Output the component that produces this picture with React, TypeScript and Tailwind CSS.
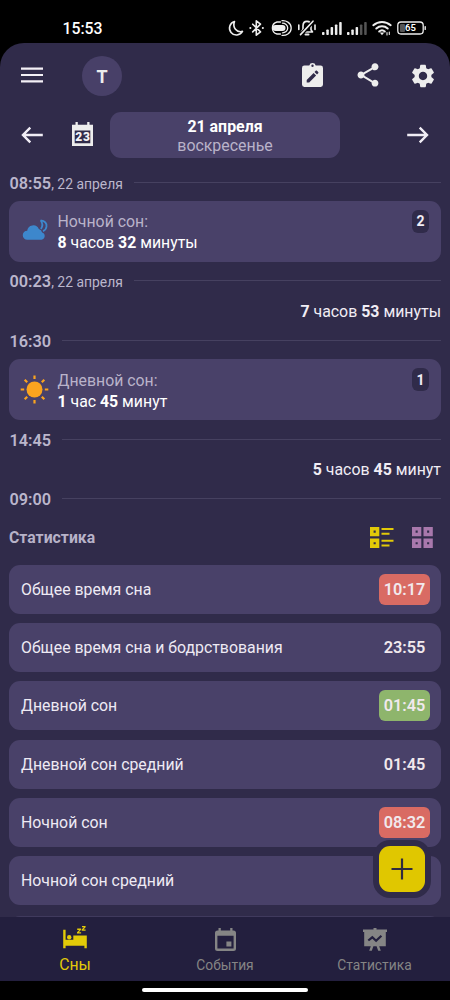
import type { ReactNode } from 'react';
import { MdSettings, MdShare } from 'react-icons/md';

function StatusBar() {
  return (
    <div className="flex h-[43px] shrink-0 items-start justify-between pl-[62.500px] pr-[23px] pt-[17px] text-white">
      <span className="mt-px text-[15.800px] font-medium leading-[22px]">15:53</span>
      <svg width="200" height="22" viewBox="227 17 200 22" fill="none" stroke="#eee" strokeWidth="1.6" strokeLinecap="round" strokeLinejoin="round">
        <path d="M234.500 21.500a6.900 6.900 0 1 0 8 9.900c-6 1.500-10.200-4-8-9.900Z" />
        <path d="m252.700 24.200 7.800 7.700-4.200 3.300V20.800l4.200 3.300-7.800 7.800" />
        <path d="M250.300 28h.1M262.800 28h.1" strokeWidth="2" />
        <path d="M280.500 22h-3.500a6.200 6.200 0 0 0 0 12h3.500M282 20.700c3.500-.4 9.200 1.800 9.200 7.300s-5.700 7.900-9.200 7.300M282.500 23.200c2.600 0 5.200 1.900 5.200 4.800s-2.600 4.800-5.200 4.800" strokeWidth="1.300" />
        <rect x="272.500" y="25" width="13" height="6" rx="3" fill="#eee" stroke="none" />
        <path d="M301.500 32h11l-1.500-2.300V26c0-2.700-1.500-4.600-4-4.600s-4 1.900-4 4.600v3.500L301.500 32Z" />
        <path d="M305.500 34.500h3" strokeWidth="2" />
        <path d="m300.500 35 13-14" stroke="#000" strokeWidth="4" />
        <path d="m300.500 34.600 12.500-13.400M298.800 25v4.500M315 25v4.500" />
        <g fill="#eee" stroke="none">
          <rect x="322" y="32" width="2.500" height="3" rx=".8" /><rect x="326.300" y="29.500" width="2.500" height="5.500" rx=".8" /><rect x="330.600" y="27" width="2.500" height="8" rx=".8" /><rect x="334.900" y="24.500" width="2.500" height="10.500" rx=".8" /><rect x="339.200" y="22" width="2.500" height="13" rx=".8" />
          <rect x="347" y="32" width="2.500" height="3" rx=".8" /><rect x="351.300" y="29.500" width="2.500" height="5.500" rx=".8" /><rect x="355.600" y="27" width="2.500" height="8" rx=".8" />
          <g fill="#555"><rect x="359.900" y="24.500" width="2.500" height="10.500" rx=".8" /><rect x="364.200" y="22" width="2.500" height="13" rx=".8" /></g>
        </g>
        <path d="M373.300 25.200c5-4.400 12.400-4.400 17.400 0M376.300 28.500c3.300-2.900 8.100-2.900 11.400 0M379.200 31.500c1.600-1.400 4-1.400 5.600 0" strokeWidth="2" />
        <path d="m379.800 32.500 2.200 2.700 2.200-2.700Z" fill="#eee" stroke="none" />
        <path d="M387 32.500v2.500M389.300 32v2.500" strokeWidth="1.100" />
        <rect x="397.800" y="22" width="25.400" height="12" rx="3.200" strokeWidth="1.300" />
        <rect x="400" y="24" width="5" height="8" rx="1" fill="#555" stroke="none" />
        <path d="M425.200 26.800v2.600" strokeWidth="1.400" />
        <text x="410.500" y="31.400" textAnchor="middle" fill="#fff" stroke="none" fontSize="9.500" fontWeight="600">65</text>
      </svg>
    </div>
  );
}

function Arrow({ right = false }: { right?: boolean }) {
  return (
    <svg width="24" height="20" viewBox="0 0 24 20" className={right ? 'rotate-180' : ''} fill="none" stroke="#f0edf5" strokeWidth="2.400">
      <path d="M22.800 10H3M10.300 2.700 3 10l7.300 7.300" />
    </svg>
  );
}

function Header() {
  return (
    <>
      <div className="flex h-[64px] shrink-0 items-center pl-[21px] pr-[13px] text-[#ededed]">
        <svg width="22" height="16" viewBox="0 0 22 16" fill="#f3f0f6">
          <path d="M0 .500h22v2.200H0zM0 6.900h22v2.200H0zM0 13.300h22v2.200H0z" />
        </svg>
        <div className="ml-[39px] mt-[2px] flex size-10 items-center justify-center rounded-full bg-[#484068] text-[18px] font-bold">T</div>
        <svg className="ml-[180px]" width="21" height="25" viewBox="0 0 21 25" fill="#ededed">
          <path fillRule="evenodd" d="M2.400 2.500H7.300a3.300 3.300 0 0 1 6.400 0h4.900A2.400 2.400 0 0 1 21 4.900v16.600a2.400 2.400 0 0 1-2.400 2.400H2.400A2.400 2.400 0 0 1 0 21.500V4.900A2.400 2.400 0 0 1 2.400 2.500Zm8.100-.900a1.200 1.200 0 1 0 0 2.400 1.200 1.200 0 0 0 0-2.400ZM4.700 16.900v2.500h2.500l6.900-6.900-2.500-2.500-6.900 6.900ZM12.500 9l2.500 2.500 1.200-1.200c.4-.4.4-.9 0-1.300L15 7.800c-.4-.4-.9-.4-1.300 0L12.500 9Z" />
        </svg>
        <MdShare className="ml-[31px] shrink-0" size={28} />
        <MdSettings className="ml-[27px] mt-px shrink-0" size={28} />
      </div>
      <div className="mt-[5px] flex h-[46px] shrink-0 items-center px-[20px]">
        <Arrow />
        <svg className="ml-[28px] mt-[-2px]" width="21" height="24" viewBox="0 0 21 24">
          <path fill="#ededed" d="M0 2.700h3.500V0h2.300v2.700h9.400V0h2.300v2.700H21V24H0Z" />
          <path fill="#302b4a" d="M2.700 8.400h15.600v12.800H2.700Z" />
          <text y="19.200" fontSize="12" fontWeight="900" fill="#f4f1f6"><tspan x="3.300">2</tspan><tspan x="10.900">3</tspan></text>
        </svg>
        <div className="ml-[17px] flex h-full w-[230px] flex-col items-center rounded-[11px] bg-[#494169] pt-[5px] text-[15.900px] leading-[19px]">
          <span className="font-bold text-white">21 апреля</span>
          <span className="text-[#b9b3ca]">воскресенье</span>
        </div>
        <div className="ml-auto"><Arrow right /></div>
      </div>
    </>
  );
}

function TimeMark({ time, date }: { time: string; date?: string }) {
  return (
    <div className="flex h-[20px] items-center pl-[.500px] text-[#bbb6cc]">
      <span className="w-max shrink-0 pt-[3px] text-[13.900px] leading-[20px]">
        <b className="text-[16.300px] font-semibold">{time}</b>{date && `, ${date}`}
      </span>
      <span className="ml-[11px] h-px flex-1 bg-[#464160]" />
    </div>
  );
}

function SleepCard({ title, count, icon, children }: { title: string; count: number; icon: ReactNode; children: ReactNode }) {
  return (
    <div className="flex h-[61px] rounded-[11px] bg-[#494169] pl-[11px] pr-[12px]">
      <div className="flex w-[30px] items-center">{icon}</div>
      <div className="ml-[7.500px] flex-1 pt-[10.500px] text-[15.850px] leading-[21px]">
        <div className="text-[#b9b3ca]">{title}</div>
        <div className="text-white">{children}</div>
      </div>
      <div className="mt-[9px] flex h-[23px] w-[17px] items-center justify-center rounded-[6px] bg-[#302b4a] pt-px text-[14px] font-bold text-[#f0edf5]">{count}</div>
    </div>
  );
}

const cloud = (
  <svg width="30" height="30" viewBox="0 0 30 30">
    <path fill="none" stroke="#3d87cc" strokeWidth="1.800" strokeLinejoin="round" d="M20.600 4.300c4.200.500 6.200 3.100 5.900 6.200-.2 2.200-1.500 3.900-3.500 4.600M20.600 4.300c2.200 2.900 2.400 5.800.3 8.700" />
    <path d="M7.300 23.700A4.500 4.500 0 0 1 7.200 14.700a6.100 6.100 0 0 1 11.600-1.800 4.600 4.600 0 0 1 3.300 3.600A3.700 3.700 0 0 1 21.500 23.700Z" fill="#3d87cc" />
  </svg>
);

const sun = (
  <svg width="30" height="30" viewBox="0 0 30 30">
    <circle cx="14.500" cy="14.500" r="8" fill="#fba41f" />
    <path d="M14.500.5v3.600M14.500 24.900v3.600M.7 14.500h3.500M24.800 14.500h3.500M4.700 4.700l2.500 2.500M21.800 21.800l2.500 2.500M4.700 24.300l2.500-2.500M21.800 7.200l2.500-2.500" stroke="#fba41f" strokeWidth="2.200" />
  </svg>
);

function Squares({ x }: { x: number }) {
  return (
    <path fillRule="evenodd" d={`M${x} 0h9.300v9.300h-9.300ZM${x + 3.600} 3.600v2.100h2.100v-2.100ZM${x} 11.600h9.300v9.300h-9.300ZM${x + 3.600} 15.200v2.100h2.100v-2.100Z`} />
  );
}

const stats: { label: string; value?: string; tone?: string }[] = [
  { label: 'Общее время сна', value: '10:17', tone: 'bg-[#d96b63]' },
  { label: 'Общее время сна и бодрствования', value: '23:55' },
  { label: 'Дневной сон', value: '01:45', tone: 'bg-[#8eb56c]' },
  { label: 'Дневной сон средний', value: '01:45' },
  { label: 'Ночной сон', value: '08:32', tone: 'bg-[#d96b63]' },
  { label: 'Ночной сон средний' },
];

function Navigation() {
  return (
    <nav className="relative grid h-[64px] shrink-0 grid-cols-3 bg-[#231f3e] text-[#858585]">
      <div className="flex flex-col items-center text-[#e2ca08]">
        <svg className="mt-[9px]" width="24" height="23" viewBox="0 0 24 23" fill="currentColor">
          <path d="M.2 3.700h2.400v10h7.700V9.400H23.800v12.900h-2.400V19.800H2.600v2.500H.2Z" />
          <circle cx="6.200" cy="11.300" r="2.200" />
          <path d="M14.200 2.600h3.900v1.200l-2.300 2.400h2.300v1.300h-4.100V6.300l2.300-2.400h-2.100ZM19 0h3.600v1.200l-2.100 2.200h2.100v1.300h-3.900V3.500l2.200-2.200H19Z" />
        </svg>
        <span className="mt-[6px] text-[15.800px] leading-[20px]">Сны</span>
      </div>
      <div className="flex flex-col items-center">
        <svg className="mt-[11px]" width="21" height="23" viewBox="0 0 21 23" fill="currentColor">
          <path fillRule="evenodd" d="M3.500 0h2.300v2.400h9.400V0h2.300v2.400h1A2.500 2.500 0 0 1 21 4.900v15.500a2.500 2.500 0 0 1-2.500 2.500h-16A2.500 2.500 0 0 1 0 20.400V4.900a2.500 2.500 0 0 1 2.500-2.500h1ZM2.400 7.800v12.700h16.200V7.800Zm9 5.800h5v5h-5Z" />
        </svg>
        <span className="mt-[4px] text-[13.800px] leading-[20px]">События</span>
      </div>
      <div className="flex flex-col items-center">
        <svg className="-ml-px mt-[11px]" width="24" height="23" viewBox="0 0 24 23">
          <path fill="currentColor" d="M0 1.500h10.500V0h3v1.500H24v2.400h-1.200v14.300h-6.600l1.600 4.600h-2.600l-1.600-4.600h-3.200L8.800 22.800H6.200l1.600-4.600H1.200V3.900H0Z" />
          <path d="m5.300 12.500 4-3.200 3.800 3.500 5.300-5" fill="none" stroke="#231f3e" strokeWidth="2.200" />
        </svg>
        <span className="-ml-px mt-[4px] text-[13.800px] leading-[20px]">Статистика</span>
      </div>
    </nav>
  );
}

export default function App() {
  return (
    <div className="flex h-[1000px] w-[450px] flex-col overflow-hidden bg-black font-[Roboto,sans-serif]">
      <StatusBar />
      <main className="relative flex min-h-0 flex-1 flex-col overflow-hidden rounded-t-[24px] bg-[#302b4a]">
        <Header />
        <div className="flex min-h-0 flex-1 flex-col overflow-hidden px-[9px] pt-[14px]">
          <TimeMark time="08:55" date="22 апреля" />
          <div className="mt-[8.500px]">
            <SleepCard title="Ночной сон:" count={2} icon={cloud}><b>8</b> часов <b>32</b> минуты</SleepCard>
          </div>
          <div className="mt-[9px]"><TimeMark time="00:23" date="22 апреля" /></div>
          <p className="mt-[10px] h-[20px] text-right text-[15.900px] leading-[21px] text-[#f0edf5]"><b>7</b> часов <b>53</b> минуты</p>
          <div className="mt-[9.500px]"><TimeMark time="16:30" /></div>
          <div className="mt-[9px]">
            <SleepCard title="Дневной сон:" count={1} icon={sun}><b>1</b> час <b>45</b> минут</SleepCard>
          </div>
          <div className="mt-[9px]"><TimeMark time="14:45" /></div>
          <p className="mt-[10px] h-[20px] text-right text-[15.900px] leading-[21px] text-[#f0edf5]"><b>5</b> часов <b>45</b> минут</p>
          <div className="mt-[9.500px]"><TimeMark time="09:00" /></div>
          <div className="mt-[18px] flex h-[21px] items-center pr-[8px]">
            <h2 className="flex-1 pt-[2px] text-[15.800px] font-bold text-[#b7b2c8]">Статистика</h2>
            <svg width="24" height="21" viewBox="0 0 24 21" fill="#e2ca08">
              <Squares x={0} />
              <path d="M11.500 1h12v2h-12zM11.500 5.800h8v2h-8zM11.500 12.700h12v2h-12zM11.500 17.500h8v2h-8z" />
            </svg>
            <svg className="ml-[18px]" width="21" height="21" viewBox="0 0 21 21" fill="#a878ac"><Squares x={0} /><Squares x={11.5} /></svg>
          </div>
          <div className="mt-[17px] flex flex-col gap-[9.350px]">
            {stats.map(({ label, value, tone }) => (
              <div key={label} className="flex h-[49px] shrink-0 items-center rounded-[11px] bg-[#494169] pl-[12px] pr-[11px] text-[15.850px]">
                <span className="flex-1 pt-px text-[#eeeaf4]">{label}</span>
                {value && <span className={`flex h-[31px] w-[51px] items-center justify-center rounded-[6px] pt-[2px] text-[16.300px] font-semibold text-[#f1e9ed] ${tone ?? ''}`}>{value}</span>}
              </div>
            ))}
            <div className="mt-[1.200px] h-[49px] shrink-0 rounded-[11px] bg-[#403a5d]" />
          </div>
        </div>
        <Navigation />
        <button className="absolute bottom-[83px] right-[19px] flex size-[58px] items-center justify-center rounded-[17px] bg-[#302b4a]" aria-label="Добавить">
          <span className="flex size-[46px] items-center justify-center rounded-[11px] bg-[#e0c700]">
            <svg width="22" height="22" viewBox="0 0 22 22"><path d="M11 .5v21M.5 11h21" stroke="#302b3f" strokeWidth="2.200" /></svg>
          </span>
        </button>
      </main>
      <div className="flex h-[19px] shrink-0 items-start justify-center pt-[7px]">
        <div className="h-[4px] w-[166px] rounded-full bg-white" />
      </div>
    </div>
  );
}
